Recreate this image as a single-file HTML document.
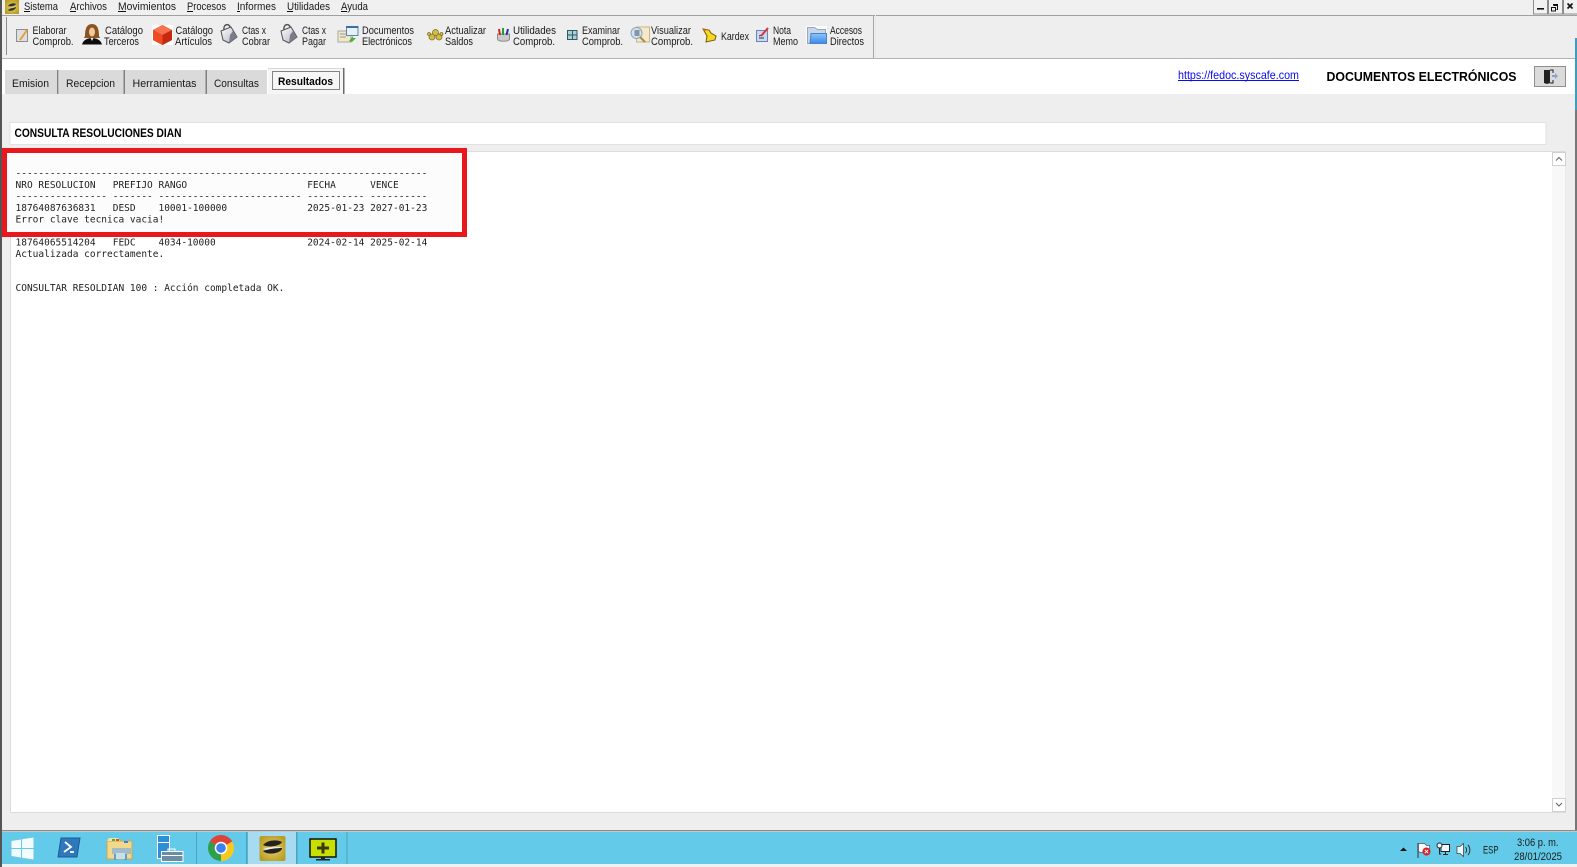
<!DOCTYPE html>
<html><head><meta charset="utf-8"><title>Documentos Electrónicos</title>
<style>
html,body{margin:0;padding:0;background:#fff;overflow:hidden}
svg{display:block}
text{font-family:"Liberation Sans",sans-serif;font-size:11px;fill:#1a1a1a}
.m text{font-family:"DejaVu Sans Mono",monospace;font-size:9.5px;fill:#222}
.b{font-weight:bold;fill:#000}
</style></head><body>
<svg width="1577" height="867" viewBox="0 0 1577 867" xmlns="http://www.w3.org/2000/svg">
<defs>
<radialGradient id="gold" cx="50%" cy="50%" r="60%"><stop offset="0" stop-color="#e4d070"/><stop offset="1" stop-color="#b89c20"/></radialGradient>
<linearGradient id="bagg" x1="0" y1="0" x2="1" y2="1"><stop offset="0" stop-color="#fcfcfe"/><stop offset="1" stop-color="#b4b4c0"/></linearGradient>
<linearGradient id="fold" x1="0" y1="0" x2="0" y2="1"><stop offset="0" stop-color="#8cc4f8"/><stop offset="1" stop-color="#3a88e8"/></linearGradient>
</defs>
<rect width="1577" height="867" fill="#fff"/>
<!-- menu -->
<rect width="1577" height="15" fill="#f0f0f0"/>
<rect y="15" width="1577" height="1" fill="#a0a0a0"/>
<rect y="16" width="1577" height="42" fill="#eeeeee"/>
<rect y="58" width="1577" height="1" fill="#b4b4b4"/>
<rect x="5" y="0" width="14" height="14" fill="url(#gold)"/>
<path d="M8 6c2-3 6-3 8-2-1 2-5 3-8 2zM8 10c2-2 6-2 8-3 0 3-6 5-8 3z" fill="#333"/>
<g>
<text lengthAdjust="spacingAndGlyphs" x="24" y="10" textLength="34">Sistema</text><rect x="24" y="11" width="6" height="1" fill="#111"/>
<text lengthAdjust="spacingAndGlyphs" x="70" y="10" textLength="37">Archivos</text><rect x="70" y="11" width="6" height="1" fill="#111"/>
<text lengthAdjust="spacingAndGlyphs" x="118" y="10" textLength="58">Movimientos</text><rect x="118" y="11" width="8" height="1" fill="#111"/>
<text lengthAdjust="spacingAndGlyphs" x="187" y="10" textLength="39">Procesos</text><rect x="187" y="11" width="6" height="1" fill="#111"/>
<text lengthAdjust="spacingAndGlyphs" x="237" y="10" textLength="39">Informes</text><rect x="237" y="11" width="3" height="1" fill="#111"/>
<text lengthAdjust="spacingAndGlyphs" x="287" y="10" textLength="43">Utilidades</text><rect x="287" y="11" width="6" height="1" fill="#111"/>
<text lengthAdjust="spacingAndGlyphs" x="341" y="10" textLength="27">Ayuda</text><rect x="341" y="11" width="6" height="1" fill="#111"/>
</g>
<!-- window controls -->
<g fill="#f2f2f2" stroke="#8c8c8c"><rect x="1533.5" y="-1" width="14" height="15"/><rect x="1548.5" y="-1" width="14" height="15"/><rect x="1563.5" y="-1" width="14" height="15"/></g>
<rect x="1537" y="8" width="7" height="1.6" fill="#111"/>
<path d="M1553.5 5.5h4v4h-1M1551.5 7.500h4v3.500h-4z" fill="none" stroke="#111"/><rect x="1553" y="4" width="5" height="1.400" fill="#111"/>
<path d="M1567.500 3.500l5 5M1572.500 3.500l-5 5" stroke="#111" stroke-width="1.600"/>
<!-- toolbar frame -->
<rect x="6" y="17" width="1" height="38" fill="#8c8c8c"/>
<rect x="873" y="15" width="1" height="43" fill="#a6a6a6"/>
<rect x="875" y="15" width="1" height="43" fill="#e8e8e8"/>
<!-- toolbar labels -->
<g>
<text lengthAdjust="spacingAndGlyphs" x="32.5" y="34" textLength="34">Elaborar</text><text lengthAdjust="spacingAndGlyphs" x="32.5" y="45" textLength="41">Comprob.</text>
<text lengthAdjust="spacingAndGlyphs" x="105" y="34" textLength="38">Catálogo</text><text lengthAdjust="spacingAndGlyphs" x="104" y="45" textLength="35">Terceros</text>
<text lengthAdjust="spacingAndGlyphs" x="175.5" y="34" textLength="37.5">Catálogo</text><text lengthAdjust="spacingAndGlyphs" x="175" y="45" textLength="37">Artículos</text>
<text lengthAdjust="spacingAndGlyphs" x="242" y="34" textLength="24">Ctas x</text><text lengthAdjust="spacingAndGlyphs" x="242" y="45" textLength="28">Cobrar</text>
<text lengthAdjust="spacingAndGlyphs" x="302" y="34" textLength="24">Ctas x</text><text lengthAdjust="spacingAndGlyphs" x="302" y="45" textLength="24">Pagar</text>
<text lengthAdjust="spacingAndGlyphs" x="362" y="34" textLength="52">Documentos</text><text lengthAdjust="spacingAndGlyphs" x="362" y="45" textLength="50">Electrónicos</text>
<text lengthAdjust="spacingAndGlyphs" x="445" y="34" textLength="41">Actualizar</text><text lengthAdjust="spacingAndGlyphs" x="445" y="45" textLength="28">Saldos</text>
<text lengthAdjust="spacingAndGlyphs" x="513" y="34" textLength="43">Utilidades</text><text lengthAdjust="spacingAndGlyphs" x="513" y="45" textLength="42">Comprob.</text>
<text lengthAdjust="spacingAndGlyphs" x="582" y="34" textLength="38">Examinar</text><text lengthAdjust="spacingAndGlyphs" x="582" y="45" textLength="41">Comprob.</text>
<text lengthAdjust="spacingAndGlyphs" x="651" y="34" textLength="40">Visualizar</text><text lengthAdjust="spacingAndGlyphs" x="651" y="45" textLength="42">Comprob.</text>
<text lengthAdjust="spacingAndGlyphs" x="721" y="40" textLength="28">Kardex</text>
<text lengthAdjust="spacingAndGlyphs" x="773" y="34" textLength="18">Nota</text><text lengthAdjust="spacingAndGlyphs" x="773" y="45" textLength="25">Memo</text>
<text lengthAdjust="spacingAndGlyphs" x="830" y="34" textLength="32">Accesos</text><text lengthAdjust="spacingAndGlyphs" x="830" y="45" textLength="34">Directos</text>
</g>
<!-- toolbar icons -->
<rect x="16.500" y="29.500" width="11" height="12" fill="#dedede" stroke="#8e8e8e"/><path d="M20 40l7-10" stroke="#e59a35" stroke-width="1.800"/>
<path d="M85 36c0-8 2-12 7-12s7 4 7 12l1 2H84z" fill="#8a5420"/><ellipse cx="92" cy="32" rx="3" ry="4.500" fill="#f0c8a0"/><path d="M82 44.500c1-4 5-6.500 10-6.500s9 2.500 10 6.500z" fill="#0c0c0c"/><path d="M90.500 38h3l-1.500 3z" fill="#eee"/>
<rect x="152" y="25" width="21" height="20" fill="#fff"/><path d="M162.500 25l9.500 5v10l-9.500 5-9.500-5V30z" fill="#e63a1c"/><path d="M162.500 35l9.500-5-9.500-5-9.500 5z" fill="#f8704c"/><path d="M162.500 35v10l-9.500-5V30z" fill="#ee4a26"/><path d="M162.500 35v10l9.500-5V30z" fill="#c42a10"/>
<g><path d="M221 31l10-4 6 10-8 6-6-3z" fill="url(#bagg)" stroke="#50515c"/><path d="M224 30c-1-6 5-7 6-3" fill="none" stroke="#555" stroke-width="1.500"/><path d="M233 31l4 6-8 6 1-8z" fill="#7c7c88"/></g>
<g transform="translate(60 0)"><path d="M221 31l10-4 6 10-8 6-6-3z" fill="url(#bagg)" stroke="#50515c"/><path d="M224 30c-1-6 5-7 6-3" fill="none" stroke="#555" stroke-width="1.500"/><path d="M233 31l4 6-8 6 1-8z" fill="#7c7c88"/></g>
<rect x="338" y="31" width="13" height="11" fill="#efe7c8" stroke="#a8a89c"/><rect x="346.500" y="26.500" width="11.500" height="9" fill="#e8f0f8" stroke="#5a86b0"/><rect x="346" y="26" width="12" height="2" fill="#3a6ea5"/><path d="M340 34h6M340 37h6" stroke="#999"/><path d="M349 41l4-5 0 2 3 0-4 4z" fill="#4cae3c"/>
<g fill="#d4bc40" stroke="#7c7030" stroke-width=".8"><circle cx="432" cy="37" r="3"/><circle cx="439" cy="37" r="3"/><circle cx="435.500" cy="32.500" r="3"/><circle cx="429" cy="34" r="1.500"/><circle cx="441.500" cy="34" r="1.500"/></g>
<path d="M497.500 34h12v5c0 3-12 3-12 0z" fill="#cacaca" stroke="#8c8c8c"/><path d="M500 35l-1-6" stroke="#c22" stroke-width="2"/><path d="M503 35v-7" stroke="#2a9a30" stroke-width="2"/><path d="M506.500 35l1.500-6" stroke="#2230b8" stroke-width="2"/>
<rect x="567.500" y="30.500" width="9.500" height="9" fill="#a8d0d8" stroke="#2c5a64"/><path d="M572.500 31v8M568 35h8.500" stroke="#2c5a64"/>
<rect x="636.500" y="27" width="13" height="15" fill="#f6e8c8" stroke="#c8b484"/><circle cx="636.500" cy="33" r="5.500" fill="#cfe4f4" stroke="#8ca4bc"/><path d="M634.500 31h5M634.500 33h5M634.500 35h5" stroke="#445"/><path d="M640 37l5 5" stroke="#a88c50" stroke-width="2"/>
<path d="M703 29l6 1 2 3 5 3-1 4-9 2 1-6z" fill="#f4d820" stroke="#7a5a10"/><path d="M703 30l6 0" stroke="#d87818"/>
<rect x="756.500" y="30.500" width="11" height="11" fill="#c8d8f0" stroke="#6a84b4"/><path d="M759 36l3-1M759 38h5" stroke="#334"/><path d="M761 36l7-8" stroke="#e03030" stroke-width="2"/>
<rect x="806" y="26" width="21" height="18" fill="#fff"/><path d="M807.500 43.500V27.500h7l3 2h8v14z" fill="#c8d6e8" stroke="#94a8c4"/><path d="M810 43.500l1-10h15.500v10z" fill="url(#fold)" stroke="#4a84cc"/>
<!-- tabs -->
<rect x="0" y="59" width="1575" height="35" fill="#fff"/>
<g fill="#dadada">
<rect x="5" y="70" width="52" height="24"/><rect x="59" y="70" width="65" height="24"/><rect x="125" y="70" width="81" height="24"/><rect x="207" y="70" width="60" height="24"/>
</g>
<g fill="#808080"><rect x="57" y="70" width="1.500" height="24"/><rect x="123.500" y="70" width="1.500" height="24"/><rect x="205.500" y="70" width="1.500" height="24"/></g>
<rect x="268" y="68" width="75" height="26" fill="#f6f6f6"/><rect x="268" y="68" width="75" height="1" fill="#d8d8d8"/>
<rect x="343" y="68" width="1.500" height="26" fill="#6a6a6a"/>
<rect x="272.500" y="71.500" width="67" height="18" fill="none" stroke="#111" stroke-dasharray="1 1" shape-rendering="crispEdges"/>
<text lengthAdjust="spacingAndGlyphs" x="12" y="87" textLength="37">Emision</text>
<text lengthAdjust="spacingAndGlyphs" x="66" y="87" textLength="49">Recepcion</text>
<text lengthAdjust="spacingAndGlyphs" x="132.500" y="87" textLength="64">Herramientas</text>
<text lengthAdjust="spacingAndGlyphs" x="214" y="87" textLength="45">Consultas</text>
<text lengthAdjust="spacingAndGlyphs" x="278" y="85" textLength="55" class="b">Resultados</text>
<text lengthAdjust="spacingAndGlyphs" x="1178" y="79" textLength="121" style="fill:#0a0aee;font-size:12px">https://fedoc.syscafe.com</text>
<rect x="1178" y="80" width="121" height="1" fill="#0a0aee"/>
<text lengthAdjust="spacingAndGlyphs" x="1326.500" y="81" textLength="190" class="b" style="font-size:13px">DOCUMENTOS ELECTRÓNICOS</text>
<rect x="1534.500" y="66.500" width="31" height="20" fill="#dbdbdb" stroke="#8f8f8f"/>
<path d="M1544 70h6v13l-3 1-3-1z" fill="#222"/><path d="M1550 70h3v3M1553 80v3h-3" fill="none" stroke="#222"/><path d="M1552 75h3v-2l3 3-3 3v-2h-3z" fill="#8aa2cc"/>
<!-- main panel -->
<rect x="2" y="94" width="1573" height="736" fill="#eeeeee"/>
<rect x="2" y="830" width="1575" height="1.500" fill="#8c8c8c"/>
<rect x="10" y="122.500" width="1536" height="22" fill="#fff" stroke="#e2e2e2"/>
<text lengthAdjust="spacingAndGlyphs" x="14.500" y="137" textLength="167" class="b" style="font-size:12px">CONSULTA RESOLUCIONES DIAN</text>
<rect x="10.500" y="151.500" width="1555" height="661" fill="#fff" stroke="#dcdcdc"/>
<rect x="1552" y="152" width="13.500" height="660" fill="#f8f8f8"/>
<rect x="1552.500" y="152.500" width="13" height="13" fill="#fff" stroke="#d0d0d0"/>
<rect x="1552.500" y="798.500" width="13" height="13" fill="#fff" stroke="#d0d0d0"/>
<path d="M1556 160.500l3-3 3 3M1556 803l3 3 3-3" fill="none" stroke="#666" stroke-width="1.100"/>
<!-- results text -->
<g class="m">
<rect x="7" y="153" width="456" height="79" fill="#fcfcfc"/>
<text x="15.500" y="176.500" xml:space="preserve">------------------------------------------------------------------------</text>
<text x="15.500" y="188" xml:space="preserve">NRO RESOLUCION   PREFIJO RANGO                     FECHA      VENCE</text>
<text x="15.500" y="199.500" xml:space="preserve">---------------- ------- ------------------------- ---------- ----------</text>
<text x="15.500" y="211" xml:space="preserve">18764087636831   DESD    10001-100000              2025-01-23 2027-01-23</text>
<text x="15.500" y="222.500" xml:space="preserve">Error clave tecnica vacia!</text>
<text x="15.500" y="245.500" xml:space="preserve">18764065514204   FEDC    4034-10000                2024-02-14 2025-02-14</text>
<text x="15.500" y="257" xml:space="preserve">Actualizada correctamente.</text>
<text x="15.500" y="291" xml:space="preserve">CONSULTAR RESOLDIAN 100 : Acción completada OK.</text>
</g>
<rect x="4.500" y="150.500" width="460" height="84" fill="none" stroke="#e8181c" stroke-width="5"/>
<!-- taskbar -->
<rect x="2" y="832" width="1575" height="32" fill="#63cbe9"/>
<rect x="2" y="864" width="1575" height="3" fill="#f0f0f0"/>
<rect x="0" y="0" width="2" height="867" fill="#555"/>
<rect x="1575" y="38" width="2" height="72" fill="#3c9cc4"/>
<rect x="1575" y="110" width="2" height="720" fill="#777"/>
<rect x="248" y="832" width="48" height="32" fill="#a6dcf2"/>
<g fill="#4ba3bd"><rect x="196" y="832" width="1" height="32"/><rect x="246" y="832" width="1.500" height="32"/><rect x="296" y="832" width="1.500" height="32"/><rect x="346.500" y="832" width="1" height="32"/></g>
<path d="M11.500 841l9.500-1.500v8.500h-9.500zM22 839.300l11.500-1.800v10.500H22zM11.500 849h9.500v8.500l-9.500-1.500zM22 849h11.500v10.500L22 857.700z" fill="#f4fbfe"/>
<path d="M61 838h19l-3 19H58z" fill="#2f78bc" stroke="#1c5a98"/><path d="M65 842l6 5-7 5M70 852h4" fill="none" stroke="#fff" stroke-width="1.800"/>
<path d="M107 841h25v18h-25z" fill="#f2d88a" stroke="#c8a850"/><path d="M107 841l2-3h9l2 3z" fill="#f4e2a0"/><rect x="112" y="839" width="3" height="2" fill="#5aa83c"/><rect x="116" y="839" width="3" height="2" fill="#d84c28"/><rect x="124" y="841" width="4" height="2" fill="#3c80d8"/><rect x="112" y="848" width="19" height="6" fill="#a4bcc8"/><rect x="114" y="854" width="3" height="6" fill="#6c9cc4"/><rect x="124" y="854" width="3" height="6" fill="#6c9cc4"/><rect x="116" y="853" width="9" height="6" fill="#c8e0ec"/>
<rect x="157.500" y="835.500" width="12" height="23" fill="#2d8fd8" stroke="#fff"/><rect x="158" y="842" width="11" height="1" fill="#fff"/>
<rect x="161.500" y="851.500" width="21.500" height="10" fill="#6c8ea2" stroke="#fff"/><path d="M168 851v-2h7v2" fill="none" stroke="#fff"/><rect x="162" y="855" width="21" height="1" fill="#fff"/>
<path d="M221 848L209.740 841.500A13 13 0 0 1 232.260 841.500z" fill="#dc4437"/>
<path d="M221 848L232.260 841.500A13 13 0 0 1 221 861z" fill="#f8c81c"/>
<path d="M221 848L221 861A13 13 0 0 1 209.740 841.500z" fill="#2e9f4c"/>
<circle cx="221" cy="848" r="6.300" fill="#fff"/><circle cx="221" cy="848" r="4.800" fill="#3d7ff0"/>
<rect x="259.500" y="836" width="26" height="25" rx="2" fill="url(#gold)"/><path d="M263 845c4-5 14-6 19-3-2 4-13 6-19 3z" fill="#222"/><path d="M263 849c5-2 13-2 19-2-4 2-14 4-19 2z" fill="#eee"/><path d="M263 851c5-2 14-3 19-3 0 5-14 8-19 3z" fill="#222"/>
<rect x="310" y="839" width="26" height="18" fill="#c8e000" stroke="#111" stroke-width="1.500"/><path d="M317 848h12M323 842.500v11" stroke="#3a3a10" stroke-width="3"/><rect x="321" y="857" width="4" height="2" fill="#222"/><rect x="316" y="859" width="14" height="1.500" fill="#222"/>
<!-- tray -->
<path d="M1400 851l3.500-3.500 3.500 3.500z" fill="#111"/>
<path d="M1418 843v15" stroke="#333"/><path d="M1418.500 843.500h6l2 2h3v7h-9l-2-1z" fill="#f6fcff" stroke="#555" stroke-width=".7"/><circle cx="1426.500" cy="851.500" r="4" fill="#d81f26"/><path d="M1424.800 849.800l3.400 3.400M1428.200 849.800l-3.400 3.400" stroke="#fff"/>
<rect x="1441" y="844.500" width="8.500" height="7" fill="#eafaff" stroke="#222"/><path d="M1443 854.500h5M1445.500 852v2" stroke="#222"/><circle cx="1439.500" cy="845.500" r="2.500" fill="#eafaff" stroke="#222"/><path d="M1439.500 848v6h1.500" fill="none" stroke="#222"/>
<path d="M1457 846.500h3l3.500-3v13l-3.500-3h-3z" fill="#eafaff" stroke="#444" stroke-width=".8"/><path d="M1465.500 847c1.500 2 1.500 4 0 6M1468 845c2.500 3 2.500 7 0 10" fill="none" stroke="#333"/>
<text lengthAdjust="spacingAndGlyphs" x="1483" y="853.500" textLength="15.500" style="font-size:11px">ESP</text>
<text lengthAdjust="spacingAndGlyphs" x="1517" y="846" textLength="41.500">3:06 p. m.</text>
<text lengthAdjust="spacingAndGlyphs" x="1514" y="860" textLength="48">28/01/2025</text>
</svg>
</body></html>
